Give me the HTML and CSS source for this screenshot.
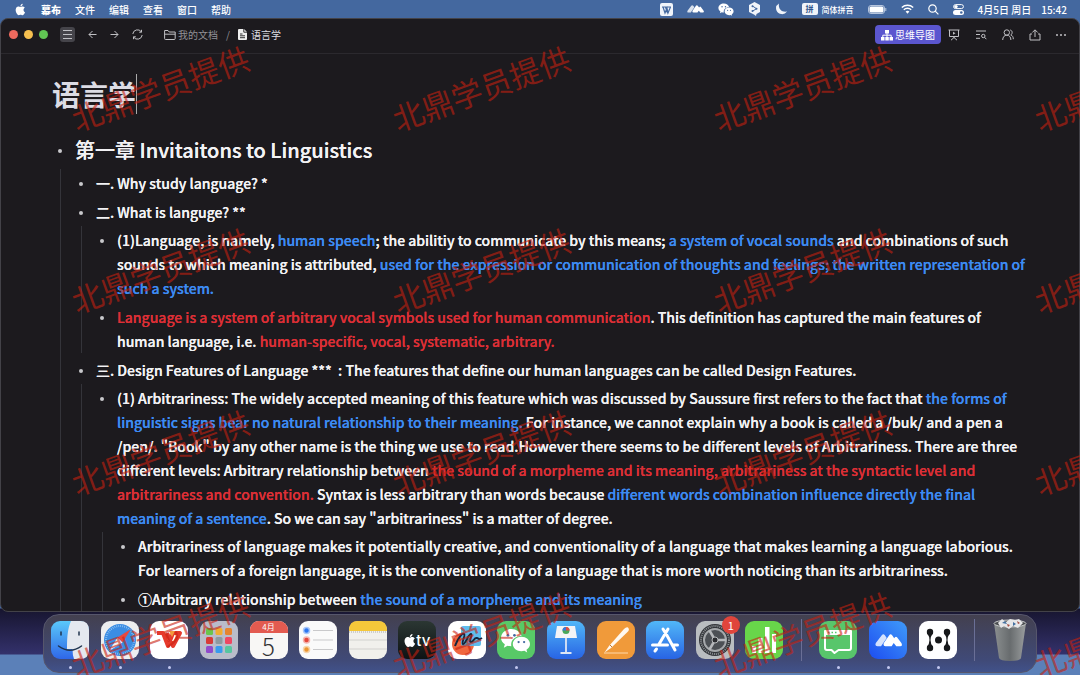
FILE: index.html
```
<!DOCTYPE html>
<html lang="zh-CN">
<head>
<meta charset="UTF-8" />
<meta name="viewport" content="width=device-width, initial-scale=1" />
<title>语言学 - 幕布</title>
<link rel="stylesheet" href="styles.css">
</head>
<body>
  <!-- Shared symbols -->
  <svg class="defs" aria-hidden="true">
    <symbol id="apple" viewBox="3 1 18 22">
      <path fill="currentColor" d="M17.100 12.700c0-2.500 2-3.700 2.100-3.800-1.200-1.700-3-2-3.600-2-1.500-.2-3 .9-3.700.9-.8 0-2-.9-3.200-.9-1.700 0-3.200 1-4.100 2.500-1.700 3-.4 7.400 1.300 9.800.8 1.200 1.800 2.500 3.100 2.500 1.200-.1 1.700-.8 3.200-.8s1.900.8 3.200.8 2.200-1.200 3-2.400c1-1.400 1.300-2.700 1.400-2.800-.1 0-2.700-1-2.700-3.800zM14.700 5.400c.7-.8 1.100-2 1-3.100-1 0-2.200.7-2.900 1.500-.6.7-1.200 1.900-1 3 1.100.1 2.200-.6 2.900-1.400z"/>
    </symbol>
    <symbol id="wechat" viewBox="0 0 28 24">
      <path fill="currentColor" d="M10 1C4.500 1 0 4.700 0 9.300c0 2.600 1.500 4.900 3.700 6.400l-1 3.200 3.600-1.900c1.100.3 2.300.5 3.700.5-1.300-5.700 4-10.200 9.800-9.800C18.800 3.800 14.800 1 10 1z"/>
      <path fill="currentColor" d="M28 15.400c0-3.900-3.800-7-8.300-7s-8.300 3.100-8.300 7 3.700 7 8.300 7c1 0 2-.2 2.900-.4l2.700 1.500-.7-2.500c2.100-1.400 3.400-3.300 3.400-5.600z"/>
      <g class="wechat-eye"><circle cx="6.700" cy="7" r="1.300"/><circle cx="13" cy="7" r="1.300"/><circle cx="17" cy="13.500" r="1.100"/><circle cx="22.300" cy="13.500" r="1.100"/></g>
    </symbol>
    <symbol id="meeting" viewBox="0 0 26 14">
      <path fill="currentColor" opacity=".8" d="M.8 9.500 6.500 2q1.500-1.800 3 0l1.800 2.500-5.500 8H2.300q-2.700 0-1.500-3z"/>
      <path fill="currentColor" d="M8.500 9.500 13.700 2q1.300-1.800 2.800 0l2 2.800.7-.9q1-1.200 2 0l4.200 5.600q1.500 3-1.200 3h-3.700l-2.500-3-2 3h-6q-2.500 0-1.500-3z"/>
    </symbol>
  </svg>

  <header class="menubar">
    <nav aria-label="应用菜单">
      <button aria-label="苹果菜单"><svg class="apple"><use href="#apple"/></svg></button>
      <button class="app-name">幕布</button>
      <button>文件</button>
      <button>编辑</button>
      <button>查看</button>
      <button>窗口</button>
      <button>帮助</button>
    </nav>
    <div class="status">
      <svg width="13" height="13" viewBox="0 0 13 13"><rect width="13" height="13" rx="2" fill="#f0f4fa"/><path d="M2 4h9M3 4l2 6 2-5 1 5 2.500-6M5.500 4l2 6" fill="none" stroke="#4469a0" stroke-width="1.200"/></svg>
      <svg width="17" height="10"><use href="#meeting"/></svg>
      <svg width="16" height="13"><use href="#wechat"/></svg>
      <svg width="13" height="14" viewBox="0 0 13 14"><path d="M6.500 0 12 3v7l-3.500 2-.5 2-2-1.500L1 10V3z" fill="#f0f4fa"/><path d="m4.500 4 4 2.700-4 2.500" fill="none" stroke="#4469a0"/><circle cx="4.500" cy="4.200" r="1" fill="#4469a0"/><circle cx="8.500" cy="6.700" r="1" fill="#4469a0"/><circle cx="4.500" cy="9" r="1" fill="#4469a0"/></svg>
      <svg width="13" height="12" viewBox="0 0 13 12"><path d="M4 .5C3 5.500 6.500 9.500 12 8.500A6 6 0 0 1 1.500 7.500 5.800 5.800 0 0 1 4 .5z" fill="#f0f4fa"/></svg>
      <span class="ime"><b>拼</b>简体拼音</span>
      <svg width="19" height="9" viewBox="0 0 19 9"><rect x=".5" y=".5" width="16" height="8" rx="2.500" fill="none" stroke="#b6c5dd"/><rect x="1.500" y="1.500" width="14" height="6" rx="1.500" fill="#fff"/><path d="M17.800 3v3" stroke="#b6c5dd"/></svg>
      <svg width="13" height="10" viewBox="0 0 13 10"><path d="M.8 3.500a8.300 8.300 0 0 1 11.400 0M2.800 5.700a5.300 5.300 0 0 1 7.400 0" fill="none" stroke="#fff" stroke-width="1.400"/><path d="M6.500 9.800 4.600 7.600a2.800 2.800 0 0 1 3.800 0z" fill="#fff"/></svg>
      <svg width="11" height="11" viewBox="0 0 11 11"><g fill="none" stroke="#fff" stroke-width="1.200"><circle cx="4.500" cy="4.500" r="3.700"/><path d="m7.200 7.200 3.200 3.200"/></g></svg>
      <svg width="11" height="11" viewBox="0 0 11 11"><rect x=".6" y=".6" width="9.800" height="4" rx="2" fill="none" stroke="#fff"/><circle cx="3" cy="2.600" r="1.700" fill="#fff"/><rect y="6" width="11" height="5" rx="2.500" fill="#fff"/><circle cx="8.300" cy="8.500" r="1.300" fill="#4469a0"/></svg>
      <div class="clock"><span>4月5日 周日</span><time>15:42</time></div>
    </div>
  </header>

  <main class="window">
    <div class="toolbar">
      <div class="lights"><button class="close" aria-label="关闭"></button><button class="minimize" aria-label="最小化"></button><button class="zoom" aria-label="缩放"></button></div>
      <div class="history">
        <button class="sidebar-toggle" aria-label="侧边栏"><svg width="15" height="15" viewBox="0 0 15 15"><path d="M3 3.500h9M3 7.500h9M3 11.500h9"/></svg></button>
        <button aria-label="后退"><svg width="9" height="9" viewBox="0 0 9 9"><path d="M8.500 4.500H1M4.500 1 1 4.500 4.500 8"/></svg></button>
        <button aria-label="前进"><svg width="9" height="9" viewBox="0 0 9 9"><path d="M.5 4.500H8M4.500 1 8 4.500 4.500 8"/></svg></button>
        <button aria-label="刷新"><svg width="11" height="11" viewBox="0 0 11 11"><path d="M.8 5A4.700 4.700 0 0 1 9.300 2.800M10.200 6A4.700 4.700 0 0 1 1.700 8.200M9.500.8v2.400H7.200M1.500 10.200V7.800h2.300"/></svg></button>
      </div>
      <nav class="crumbs" aria-label="路径">
        <a href="#"><svg width="12" height="10" viewBox="0 0 12 10"><path d="M.6 8.500v-8H4l1.200 1.500h6v6.500q0 1-1 1H1.500q-.9 0-.9-1zM.6 4.200h10.600"/></svg>我的文档</a>
        <span>/</span>
        <a href="#" class="current"><svg width="9" height="11" viewBox="0 0 9 11"><path d="M1 0h5l3 3v7q0 1-1 1H1q-1 0-1-1V1q0-1 1-1z" fill="#eee" stroke="none"/><path d="M5.800 0v3.200H9M2 5h2.500M2 6.800h5M2 8.700h5" stroke="#333"/></svg>语言学</a>
      </nav>
      <div class="tools">
        <button class="mindmap"><svg width="12" height="12" viewBox="0 0 12 12"><path d="M4 1h4v3.500H4zM0 8h3.500v3.500H0zM4.300 8h3.500v3.500H4.300zM8.500 8H12v3.500H8.500z" fill="#fff" stroke="none"/><path d="M6 4v4M1.800 8V6.200h8.400V8" stroke="#fff"/></svg>思维导图</button>
        <button aria-label="演示"><svg width="12" height="12" viewBox="0 0 12 12"><path d="M.5 1h11M1.500 1v6.500h9V1M6 7.500v1.500M6 8.500l-3 2.700M6 8.500l3 2.700"/><path d="m5 2.700 2.500 1.500L5 5.700z" fill="#c0c0c4" stroke="none"/></svg></button>
        <button aria-label="查找"><svg width="12" height="12" viewBox="0 0 12 12"><path d="M1 2h10M1 5.500h4M1 9.300h4"/><circle cx="8.300" cy="7" r="1.700"/><path d="m9.500 8.200 1.800 2"/></svg></button>
        <button aria-label="协作"><svg width="12" height="12" viewBox="0 0 12 12"><circle cx="4.800" cy="3.500" r="2.700"/><path d="M.7 11c0-3 1.700-4.800 4.100-4.800S8.900 8 8.900 11M8.200 1c2.500.5 2.500 4 .6 4.900 1.700.8 2.500 2 2.500 4.300"/></svg></button>
        <button aria-label="分享"><svg width="12" height="12" viewBox="0 0 12 12"><path d="M6 8V1M3.300 3.500 6 .8l2.700 2.700M3 5H1v6h10V5H9"/></svg></button>
        <button aria-label="更多"><svg width="10" height="12" viewBox="0 0 10 12"><g fill="#c0c0c4" stroke="none"><circle cx="1" cy="6" r="1"/><circle cx="5" cy="6" r="1"/><circle cx="9" cy="6" r="1"/></g></svg></button>
      </div>
    </div>

    <article class="document">
      <h1>语言学<i class="caret"></i></h1>
      <ul class="outline">
        <li>
          <h2 class="node">第一章 Invitaitons to Linguistics</h2>
          <ul>
            <li><p class="node">一. Why study language? *</p></li>
            <li>
              <p class="node">二. What is languge? **</p>
              <ul>
                <li><p class="node"><span>(1)Language, is namely, <em class="blue">human speech</em>; the abilitiy to communicate by this means; <em class="blue">a system of vocal sounds</em> and combinations of such sounds to which meaning is attributed, <em class="blue">used for the expression or communication of thoughts and feelings; the written representation of such a system.</em></span></p></li>
                <li><p class="node"><span><em class="red">Language is a system of arbitrary vocal symbols used for human communication</em>. This definition has captured the main features of human language, i.e. <em class="red">human-specific, vocal, systematic, arbitrary.</em></span></p></li>
              </ul>
            </li>
            <li>
              <p class="node">三. Design Features of Language ***&nbsp; : The features that define our human languages can be called Design Features.</p>
              <ul>
                <li>
                  <p class="node"><span>(1) Arbitrariness: The widely accepted meaning of this feature which was discussed by Saussure first refers to the fact that <em class="blue">the forms of linguistic signs bear no natural relationship to their meaning.</em> For instance, we cannot explain why a book is called a /buk/ and a pen a /pen/. "Book" by any other name is the thing we use to read.However there seems to be different levels of Arbitrariness. There are three different levels: Arbitrary relationship between <em class="red">the sound of a morpheme and its meaning, arbitrariness at the syntactic level and arbitrariness and convention.</em> Syntax is less arbitrary than words because <em class="blue">different words combination influence directly the final meaning of a sentence</em>. So we can say "arbitrariness" is a matter of degree.</span></p>
                  <ul>
                    <li><p class="node"><span>Arbitrariness of language makes it potentially creative, and conventionality of a language that makes learning a language laborious. For learners of a foreign language, it is the conventionality of a language that is more worth noticing than its arbitrariness.</span></p></li>
                    <li><p class="node"><span>①Arbitrary relationship between <em class="blue">the sound of a morpheme and its meaning</em></span></p></li>
                  </ul>
                </li>
              </ul>
            </li>
          </ul>
        </li>
      </ul>
    </article>
  </main>

  <footer class="dock">
    <button class="app running" aria-label="访达"><svg viewBox="0 0 38 38"><defs><linearGradient id="g-finder" x2="0" y2="1"><stop stop-color="#5ac8fa"/><stop offset="1" stop-color="#2f67e8"/></linearGradient></defs><rect width="38" height="38" rx="9" fill="url(#g-finder)"/><path d="M20 0h9q9 0 9 9v20q0 9-9 9h-6q-1.500-4-1.500-10H16C16 14 17 7 20 0z" fill="#e4e8ef"/><path d="M10 11v3M28 11v3M7.500 25q11.500 8.500 23 0" fill="none" stroke="#20344f" stroke-width="1.500" stroke-linecap="round"/></svg></button>
    <button class="app running" aria-label="Safari"><svg viewBox="0 0 38 38"><rect width="38" height="38" rx="9" fill="#eceef0"/><circle cx="19" cy="19" r="16" fill="#3b8de4"/><circle cx="19" cy="19" r="14" fill="none" stroke="#a8d4f7" stroke-width="2" stroke-dasharray=".6 1.400"/><path d="m30 8-13.500 8.500 5 5z" fill="#e8483f"/><path d="M8 30l8.500-13.500 5 5z" fill="#f2f2f2"/></svg></button>
    <button class="app running" aria-label="WPS"><svg viewBox="0 0 38 38"><rect width="38" height="38" rx="9" fill="#fff"/><path d="M7 12h6l5 13 5-13M17 12l6 13 7-13h-8" fill="none" stroke="#e63a2c" stroke-width="4" stroke-linejoin="round"/><path d="m19 10h6l-3 6z" fill="#f29a3d"/></svg></button>
    <button class="app" aria-label="启动台"><svg viewBox="0 0 38 38"><rect width="38" height="38" rx="9" fill="#b9bcc9"/><g><rect x="6" y="7" width="7" height="7" rx="1.500" fill="#6ac64d"/><rect x="15.500" y="7" width="7" height="7" rx="1.500" fill="#f0ad32"/><rect x="25" y="7" width="7" height="7" rx="1.500" fill="#e6842f"/><rect x="6" y="16" width="7" height="7" rx="1.500" fill="#d83b36"/><rect x="15.500" y="16" width="7" height="7" rx="1.500" fill="#8e999f"/><rect x="25" y="16" width="7" height="7" rx="1.500" fill="#ee4762"/><rect x="6" y="25" width="7" height="7" rx="1.500" fill="#914bcb"/><rect x="15.500" y="25" width="7" height="7" rx="1.500" fill="#3a9bed"/><rect x="25" y="25" width="7" height="7" rx="1.500" fill="#58c6a0"/></g></svg></button>
    <button class="app calendar" aria-label="日历"><span>4月</span><b>5</b></button>
    <button class="app" aria-label="提醒事项"><svg viewBox="0 0 38 38"><rect width="38" height="38" rx="9" fill="#fafafa"/><path d="M14 9.500h20M14 19h20M14 28.500h20" stroke="#c9c9cb"/><g stroke-width="1.500"><circle cx="7.500" cy="9.500" r="3" fill="#2e77f0" stroke="#a9c8fa"/><circle cx="7.500" cy="19" r="3" fill="#e5483c" stroke="#f5b5b0"/><circle cx="7.500" cy="28.500" r="3" fill="#ec9631" stroke="#f7d5ab"/></g></svg></button>
    <button class="app" aria-label="备忘录"><svg viewBox="0 0 38 38"><rect width="38" height="38" rx="9" fill="#f1f0ec"/><path d="M0 10V9q0-9 9-9h20q9 0 9 9v1z" fill="#f5c83a"/><path d="M0 11h38" stroke="#aaa" stroke-dasharray="1 1"/><path d="M0 19h38M0 28h38" stroke="#d2d1ce"/></svg></button>
    <button class="app tv" aria-label="Apple TV"><svg><use href="#apple"/></svg>tv</button>
    <button class="app" aria-label="无边记"><svg viewBox="0 0 38 38"><rect width="38" height="38" rx="9" fill="#fff"/><circle cx="15" cy="23" r="11" fill="#f0673f"/><rect x="13" y="5" width="20" height="20" rx="2" fill="#50b7ec" opacity=".92"/><path d="M7 25C10 17 14 12 16 13s-3 9-1 10 6-11 8-10-3 8 0 8 3-5 6-4 2 2 5 0" fill="none" stroke="#16253c" stroke-width="2"/></svg></button>
    <button class="app running" aria-label="微信"><svg viewBox="0 0 38 38"><rect width="38" height="38" rx="9" fill="#58c967"/><svg x="4" y="7" width="29" height="25" class="dock-wechat"><use href="#wechat"/></svg></svg></button>
    <button class="app" aria-label="Keynote"><svg viewBox="0 0 38 38"><defs><linearGradient id="g-key" x2="0" y2="1"><stop stop-color="#51b7f8"/><stop offset="1" stop-color="#2864e4"/></linearGradient></defs><rect width="38" height="38" rx="9" fill="url(#g-key)"/><path d="M10 5h18l2 12H8z" fill="#f4f4f6"/><path d="M19 17v14M13.500 32h11" stroke="#dce5f5" stroke-width="1.800"/><circle cx="19" cy="9.500" r="3.500" fill="#49a85a"/><path d="M19 9.500V6a3.500 3.500 0 0 1 3.500 3.500z" fill="#e14b45"/><path d="M19 9.500h-3.500A3.500 3.500 0 0 1 19 6z" fill="#3e75dd"/></svg></button>
    <button class="app" aria-label="Pages"><svg viewBox="0 0 38 38"><rect width="38" height="38" rx="9" fill="#f09a3a"/><path d="M31 6.500c1.500 1.500 1 3-.5 4.500L14 27l-6.500 4.500L12 25 27 8q2.500-2.500 4-1.500z" fill="#fff8ef"/><path d="m13 24 2 2" stroke="#ba7939"/><path d="M7 32h24" stroke="#ffd9ab"/></svg></button>
    <button class="app" aria-label="App Store"><svg viewBox="0 0 38 38"><rect width="38" height="38" rx="9" fill="url(#g-key)"/><path d="m17 8 4 6.500L29 29M22 8l-9.500 16M6.500 24h15M27 24h4.500M10.500 28 9 30" fill="none" stroke="#fff" stroke-width="3" stroke-linecap="round"/></svg></button>
    <button class="app" aria-label="系统设置，1 个通知"><svg viewBox="0 0 38 38"><rect width="38" height="38" rx="9" fill="#b9bdc0"/><circle cx="19" cy="19" r="16" fill="#33363a"/><circle cx="19" cy="19" r="14" fill="none" stroke="#8e9296" stroke-width="2" stroke-dasharray="1 1"/><circle cx="19" cy="19" r="11" fill="#4c5055" stroke="#a5a8ab" stroke-width="2"/><path d="M19 19h11M19 19l-5.500-9.500M19 19l-5.500 9.500" stroke="#b5b8bb" stroke-width="2.500"/><circle cx="19" cy="19" r="3" fill="#2a2c30" stroke="#b5b8bb"/></svg><span class="badge">1</span></button>
    <button class="app" aria-label="Numbers"><svg viewBox="0 0 38 38"><rect width="38" height="38" rx="9" fill="#68d64a"/><path d="M7 25h4v7H7zM13.500 17h4v15h-4zM20 6h4.500v26H20zM27 13h4v19h-4z" fill="#fff"/></svg></button>
    <i class="divider"></i>
    <button class="app running" aria-label="短信"><svg viewBox="0 0 38 38"><rect width="38" height="38" rx="9" fill="#58c66b"/><path d="M6 10h26v17q0 2-2 2H19.500L15.500 32l-3-3H8q-2 0-2-2z" fill="none" stroke="#fff" stroke-width="2" stroke-linejoin="round"/><path d="M5 14v-3q0-2 2-2h24q2 0 2 2v3z" fill="#fff"/><path d="M9 11.500h1.500M12.500 11.500H14M16 11.500h1.500" stroke="#58c66b" stroke-width="1.500"/></svg></button>
    <button class="app running" aria-label="腾讯会议"><svg viewBox="0 0 38 38"><defs><linearGradient id="g-meet" x1="0" y1="1" x2="1" y2="0"><stop stop-color="#1d4df0"/><stop offset="1" stop-color="#3f9bfa"/></linearGradient></defs><rect width="38" height="38" rx="9" fill="url(#g-meet)"/><svg x="6" y="12" width="27" height="15" color="#fff"><use href="#meeting"/></svg></svg></button>
    <button class="app running" aria-label="幕布"><svg viewBox="0 0 38 38"><rect width="38" height="38" rx="9" fill="#fff"/><g fill="#17181a"><circle cx="11" cy="11" r="3.200"/><circle cx="11" cy="27" r="3.200"/><circle cx="28" cy="11" r="3.200"/><circle cx="28" cy="27" r="3.200"/><circle cx="19.500" cy="19" r="3.500"/><path d="M8 12h6q-5 7 0 14H8q5-7 0-14zM25 12h6q-5 7 0 14h-6q5-7 0-14z"/></g></svg></button>
    <i class="divider"></i>
    <button class="app trash" aria-label="废纸篓"><svg viewBox="0 0 34 44"><defs><linearGradient id="g-trash"><stop stop-color="#8b8f90"/><stop offset=".5" stop-color="#686c6e"/><stop offset="1" stop-color="#9b9e9f"/></linearGradient></defs><path d="M1 5h32l-5 35q-1 3-11 3T6 40z" fill="url(#g-trash)"/><ellipse cx="17" cy="5.500" rx="16" ry="3.500" fill="#4a4d50" stroke="#c7c9ca"/><path d="m5 5 4-4 4 3 4-3 5 1 4-1 4 4-5 5-5-2-4 3-5-3-3 2z" fill="#e6e6e8"/><path d="m9 5 3-2 2 3zM20 4l3 2-3 2z" fill="#4470a0"/><path d="m24 3 3 2-2 1zM14 6l3 1-2 2z" fill="#a04a40"/></svg></button>
  </footer>

  <div class="watermark" aria-hidden="true">
    <span>北鼎学员提供</span><span>北鼎学员提供</span><span>北鼎学员提供</span><span>北鼎学员提供</span>
    <span>北鼎学员提供</span><span>北鼎学员提供</span><span>北鼎学员提供</span><span>北鼎学员提供</span>
    <span>北鼎学员提供</span><span>北鼎学员提供</span><span>北鼎学员提供</span><span>北鼎学员提供</span>
    <span>北鼎学员提供</span><span>北鼎学员提供</span><span>北鼎学员提供</span><span>北鼎学员提供</span>
  </div>
</body>
</html>
```

FILE: styles.css
```
*,
*::before,
*::after {
  box-sizing: border-box;
}

body {
  position: relative;
  display: flex;
  flex-direction: column;
  height: 100vh;
  margin: 0;
  overflow: hidden;
  font-family: "Noto Sans CJK SC", sans-serif;
  font-size: 10px;
  color: #f2f2f4;
  background: linear-gradient(to top, #5b80b8 20px, #33316b 21px, #17152f 66px, #44689f 67px);
}

button {
  display: flex;
  align-items: center;
  justify-content: center;
  padding: 0;
  border: 0;
  background: none;
  color: inherit;
  font: inherit;
}

ul,
h1,
h2,
p {
  margin: 0;
  padding: 0;
}

a {
  color: inherit;
  text-decoration: none;
}

.defs {
  position: absolute;
  width: 0;
  height: 0;
}

/* Menu bar */
.menubar {
  display: flex;
  justify-content: space-between;
  height: 18px;
  padding: 0 13px 0 14px;
  font-weight: 500;
  color: #fff;
}

.menubar nav,
.status {
  display: flex;
  align-items: center;
  gap: 14px;
}

.apple {
  width: 13px;
  height: 13px;
}

.app-name {
  font-weight: 900;
}

.wechat-eye {
  fill: #4469a0;
}

.ime {
  display: flex;
  align-items: center;
  gap: 4px;
  font-size: 8px;
}

.ime b {
  width: 16px;
  border-radius: 2px;
  line-height: 12px;
  text-align: center;
  color: #34568c;
  background: #f0f4fa;
}

.clock {
  display: flex;
  gap: 10px;
}

/* Window */
.window {
  flex: 1;
  min-height: 0;
  overflow: hidden;
  border: 1px solid #434248;
  border-radius: 8px;
  background: #1c1a1e;
}

.toolbar {
  display: flex;
  align-items: center;
  height: 35px;
  padding: 0 13px 3px 8px;
  border-bottom: 1px solid #2b292e;
}

.toolbar svg {
  fill: none;
  stroke: #c0c0c4;
}

.lights,
.history,
.crumbs,
.crumbs a,
.tools {
  display: flex;
  align-items: center;
}

.lights {
  gap: 6px;
}

.lights button {
  width: 9px;
  height: 9px;
  border-radius: 50%;
}

.close {
  background: #ed6a5e;
}

.minimize {
  background: #f5bf4f;
}

.zoom {
  background: #61c554;
}

.history {
  gap: 13px;
  margin-left: 12px;
}

.sidebar-toggle {
  border-radius: 3px;
  background: #45444a;
}

.crumbs {
  gap: 8px;
  margin-left: 21px;
  color: #929196;
}

.crumbs a {
  gap: 2px;
}

.crumbs .current {
  gap: 4px;
  color: #dedee2;
}

.tools {
  gap: 15px;
  margin-left: auto;
}

.mindmap {
  gap: 2px;
  height: 19px;
  margin-right: -8px;
  padding: 0 6px;
  border-radius: 4px;
  background: #5b56cf;
  color: #fff;
}

/* Outline */
.document {
  padding: 20px 49px 0 51px;
}

h1 {
  display: flex;
  align-items: center;
  margin-bottom: 19px;
  font-size: 28px;
  line-height: 40px;
  color: #dcdce4;
}

.caret {
  width: 1px;
  height: 40px;
  background: #aaa;
}

ul {
  list-style: none;
}

.outline {
  margin-left: 6px;
}

.outline li + li {
  margin-top: 5px;
}

.outline ul {
  margin: 2px 0 0 2px;
  padding: 2px 0 0 18px;
  border-left: 1px solid #34343a;
}

.node {
  display: flex;
  gap: 13px;
  font-size: 14px;
  font-weight: 500;
  line-height: 24px;
  text-shadow: 0 0 currentColor;
}

.node::before {
  content: "";
  flex: none;
  width: 4px;
  height: 4px;
  margin-top: 11px;
  border-radius: 50%;
  background: #c8c8cc;
}

h2.node {
  font-size: 20px;
  line-height: 34px;
}

h2.node::before {
  margin-top: 16px;
}

em {
  font-style: normal;
}

.blue {
  color: #3d8bf2;
}

.red {
  color: #dc2f36;
}

/* Dock */
.dock {
  display: flex;
  align-items: center;
  justify-content: space-between;
  width: 92%;
  height: 59px;
  margin: 2px auto 2px;
  padding: 0 9px 7px 7px;
  border: 1px solid #56566c;
  border-radius: 16px;
  background: linear-gradient(#43404f, #404a78 80%, #41528a);
}

.app {
  position: relative;
  width: 38px;
  height: 38px;
  border-radius: 9px;
}

.app > svg {
  width: 100%;
  height: 100%;
}

.running::after {
  content: "";
  position: absolute;
  bottom: -10px;
  left: 50%;
  width: 3px;
  height: 3px;
  margin-left: -1px;
  border-radius: 50%;
  background: #c3c8f0;
}

.calendar {
  flex-direction: column;
  justify-content: flex-start;
  overflow: hidden;
  color: #333;
  background: #f8f7f5;
}

.calendar span {
  width: 100%;
  font-size: 8px;
  line-height: 12px;
  color: #fff;
  background: #e35b50;
}

.calendar b {
  font-size: 24px;
  font-weight: 300;
  line-height: 25px;
}

.tv {
  font-family: Inter, sans-serif;
  font-size: 15px;
  font-weight: 500;
  color: #fff;
  background: linear-gradient(#2b3733, #0e1214);
}

.app.tv > svg {
  width: 12px;
  height: 15px;
}

.dock-wechat {
  color: #fff;
}

.badge {
  position: absolute;
  top: -5px;
  right: -6px;
  width: 18px;
  border-radius: 50%;
  font-size: 11px;
  line-height: 18px;
  color: #fff;
  background: #e0453c;
}

.divider {
  width: 1px;
  height: 42px;
  margin: 0 6px;
  background: #6a6f96;
}

.trash {
  width: 34px;
  height: 44px;
}

/* Tiled watermark above everything */
.watermark {
  position: absolute;
  inset: -3px 0 0 -1px;
  display: grid;
  grid-template-columns: repeat(4, 321px);
  grid-auto-rows: 182px;
  overflow: hidden;
  pointer-events: none;
  font-size: 31px;
  line-height: 44px;
  color: rgba(200, 32, 15, 0.6);
}

.watermark span {
  place-self: center;
  white-space: nowrap;
  transform: rotate(-20deg);
}
```
